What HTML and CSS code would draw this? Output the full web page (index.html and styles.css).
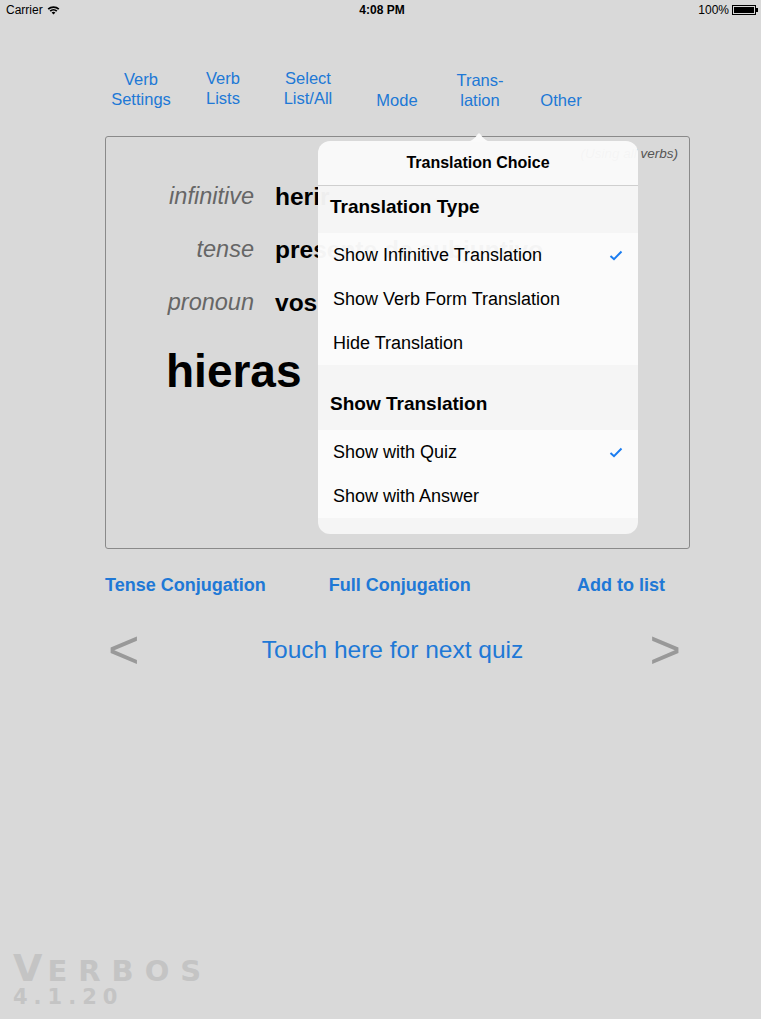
FILE: index.html
```html
<!DOCTYPE html>
<html>
<head>
<meta charset="utf-8">
<link rel="stylesheet" href="styles.css">
</head>
<body>
<div class="page">
  <div class="status">
    <div class="status-left">Carrier
      <svg class="wifi" width="13" height="10" viewBox="0 0 13 10">
        <path d="M0.6 3.6 A8.5 8.5 0 0 1 12.4 3.6 L11.2 4.8 A6.8 6.8 0 0 0 1.8 4.8 Z" fill="#000"/>
        <path d="M2.6 5.6 A5.6 5.6 0 0 1 10.4 5.6 L9.2 6.8 A3.9 3.9 0 0 0 3.8 6.8 Z" fill="#000"/>
        <path d="M4.6 7.6 A2.7 2.7 0 0 1 8.4 7.6 L6.5 9.6 Z" fill="#000"/>
      </svg>
    </div>
    <div class="status-time">4:08 PM</div>
    <div class="status-right">100% <span class="battery"><span class="battery-fill"></span></span><span class="battery-nub"></span></div>
  </div>

  <nav class="toolbar">
    <span class="tb tb1">Verb<br>Settings</span>
    <span class="tb tb2">Verb<br>Lists</span>
    <span class="tb tb3">Select<br>List/All</span>
    <span class="tb tb4">Mode</span>
    <span class="tb tb5">Trans-<br>lation</span>
    <span class="tb tb6">Other</span>
  </nav>

  <section class="card">
    <div class="note-row"><span class="note">(Using all verbs)</span></div>
    <div class="row"><span class="label">infinitive</span><span class="value">herir</span></div>
    <div class="row"><span class="label">tense</span><span class="value">presente de subjuntivo</span></div>
    <div class="row"><span class="label">pronoun</span><span class="value">vos</span></div>
    <div class="answer">hieras</div>
  </section>

  <div class="actions">
    <span class="action">Tense Conjugation</span>
    <span class="action action-mid">Full Conjugation</span>
    <span class="action action-end">Add to list</span>
  </div>

  <div class="quiz">
    <span class="arrow">&lt;</span>
    <span class="quiz-text">Touch here for next quiz</span>
    <span class="arrow">&gt;</span>
  </div>

  <div class="logo">
    <div class="logo-name"><span class="logo-big">V</span>ERBOS</div>
    <div class="logo-ver">4.1.20</div>
  </div>

  <div class="popover">
    <svg class="pop-arrow" width="30" height="14" viewBox="0 0 30 14">
      <path d="M0 14 C6 14 9 12 12 8.5 L14 5.8 Q15 4.8 16 5.8 L18 8.5 C21 12 24 14 30 14 Z" fill="#fafafa"/>
    </svg>
    <div class="pop-title">Translation Choice</div>
    <div class="pop-section pop-section1">Translation Type</div>
    <div class="pop-item"><span>Show Infinitive Translation</span>
      <svg class="check" width="14" height="11" viewBox="0 0 14 11"><path d="M1.5 6 L5 9.2 L12.5 1.5" fill="none" stroke="#1a7cf0" stroke-width="2"/></svg>
    </div>
    <div class="pop-item"><span>Show Verb Form Translation</span></div>
    <div class="pop-item"><span>Hide Translation</span></div>
    <div class="pop-section pop-section2">Show Translation</div>
    <div class="pop-item"><span>Show with Quiz</span>
      <svg class="check" width="14" height="11" viewBox="0 0 14 11"><path d="M1.5 6 L5 9.2 L12.5 1.5" fill="none" stroke="#1a7cf0" stroke-width="2"/></svg>
    </div>
    <div class="pop-item"><span>Show with Answer</span></div>
    <div class="pop-foot"></div>
  </div>
</div>
</body>
</html>
```

FILE: styles.css
```css
* { box-sizing: border-box; }
html, body { margin: 0; padding: 0; }
body {
  background: #d9d9d9;
  font-family: "Liberation Sans", Arial, sans-serif;
  color: #000;
}
.page {
  position: relative;
  width: 761px;
  height: 1019px;
  display: flex;
  flex-direction: column;
  overflow: hidden;
}

/* status bar */
.status {
  height: 20px;
  display: grid;
  grid-template-columns: 1fr auto 1fr;
  align-items: center;
  font-size: 12px;
  padding: 0 3px 0 6px;
}
.status-left { display: flex; align-items: center; gap: 4px; }
.wifi { margin-top: -1px; }
.status-time { font-weight: bold; font-size: 12px; }
.status-right { display: flex; justify-content: flex-end; align-items: center; }
.battery {
  margin-left: 3px;
  width: 24px;
  height: 10px;
  border: 1px solid #000;
  padding: 1px;
  display: flex;
}
.battery-fill { flex: 1; background: #000; }
.battery-nub { width: 2px; height: 4px; background: #000; }

/* toolbar */
.toolbar {
  margin-top: 49px;
  height: 40px;
  display: flex;
  align-items: flex-end;
  padding-left: 100px;
}
.tb {
  color: #2078d6;
  font-size: 16.5px;
  line-height: 20px;
  text-align: center;
}
.tb1 { width: 82px; }
.tb2 { width: 82px; position: relative; top: -1px; }
.tb3 { width: 88px; position: relative; top: -1px; }
.tb4 { width: 90px; position: relative; top: 1px; }
.tb5 { width: 76px; position: relative; top: 1px; }
.tb6 { width: 86px; position: relative; top: 1px; }

/* card */
.card {
  margin-top: 27px;
  margin-left: 105px;
  width: 585px;
  height: 413px;
  border: 1px solid #8a8a8a;
  border-radius: 3px;
  display: flex;
  flex-direction: column;
}
.note-row {
  margin-top: 7px;
  height: 20px;
  display: flex;
  justify-content: flex-end;
  padding-right: 11px;
}
.note {
  white-space: nowrap;
  line-height: 20px;
  font-size: 13.5px;
  font-style: italic;
  color: #555;
}
.row {
  height: 53px;
  display: flex;
  align-items: center;
}
.note-row + .row { margin-top: 6px; }
.label {
  width: 148px;
  text-align: right;
  font-size: 23.5px;
  font-style: italic;
  color: #666;
}
.value {
  margin-left: 21px;
  font-size: 24.5px;
  font-weight: bold;
  white-space: nowrap;
}
.answer {
  margin-top: 14px;
  margin-left: 60px;
  font-size: 46px;
  line-height: 56px;
  font-weight: bold;
}

/* actions */
.actions {
  margin-top: 24px;
  height: 24px;
  line-height: 24px;
  display: flex;
  padding-left: 105px;
  padding-right: 96px;
}
.action {
  color: #2078d6;
  font-size: 18px;
  font-weight: bold;
}
.action-mid { margin-left: 63px; }
.action-end { margin-left: auto; }

/* quiz */
.quiz {
  margin-top: 29px;
  height: 48px;
  display: flex;
  align-items: center;
  padding-left: 108px;
  padding-right: 80px;
}
.arrow {
  font-size: 54px;
  color: #999;
  line-height: 48px;
  position: relative;
  top: -1px;
}
.quiz-text {
  flex: 1;
  text-align: center;
  color: #2078d6;
  font-size: 24.5px;
  padding-right: 4px;
}

/* logo */
.logo {
  margin-top: auto;
  padding-left: 13px;
  padding-bottom: 12px;
  color: #c4c4c4;
  font-family: "DejaVu Sans", sans-serif;
  font-weight: bold;
}
.logo-name {
  font-size: 29px;
  line-height: 32px;
  letter-spacing: 11px;
}
.logo-big { font-size: 38px; letter-spacing: 5px; }
.logo-ver {
  font-size: 21px;
  line-height: 20px;
  letter-spacing: 6px;
}

/* popover */
.popover {
  position: absolute;
  left: 318px;
  top: 141px;
  width: 320px;
  height: 393px;
  border-radius: 12px;
  display: flex;
  flex-direction: column;
}
.pop-arrow {
  position: absolute;
  left: 146px;
  top: -13px;
}
.pop-title {
  height: 45px;
  line-height: 44px;
  text-align: center;
  font-size: 16px;
  font-weight: bold;
  background: rgba(250, 250, 250, 0.97);
  border-bottom: 1px solid #cfcfcf;
  border-radius: 12px 12px 0 0;
}
.pop-section {
  background: rgba(246, 246, 246, 0.97);
  font-size: 19px;
  font-weight: bold;
  padding-left: 12px;
}
.pop-section1 { height: 47px; line-height: 42px; }
.pop-section2 { height: 65px; line-height: 22px; padding-top: 28px; }
.pop-item {
  height: 44px;
  display: flex;
  align-items: center;
  justify-content: space-between;
  padding-left: 15px;
  padding-right: 15px;
  font-size: 18px;
  background: rgba(252, 252, 252, 0.97);
}
.check { margin-top: 1px; }
.pop-foot {
  flex: 1;
  background: rgba(246, 246, 246, 0.97);
  border-radius: 0 0 12px 12px;
}
```
